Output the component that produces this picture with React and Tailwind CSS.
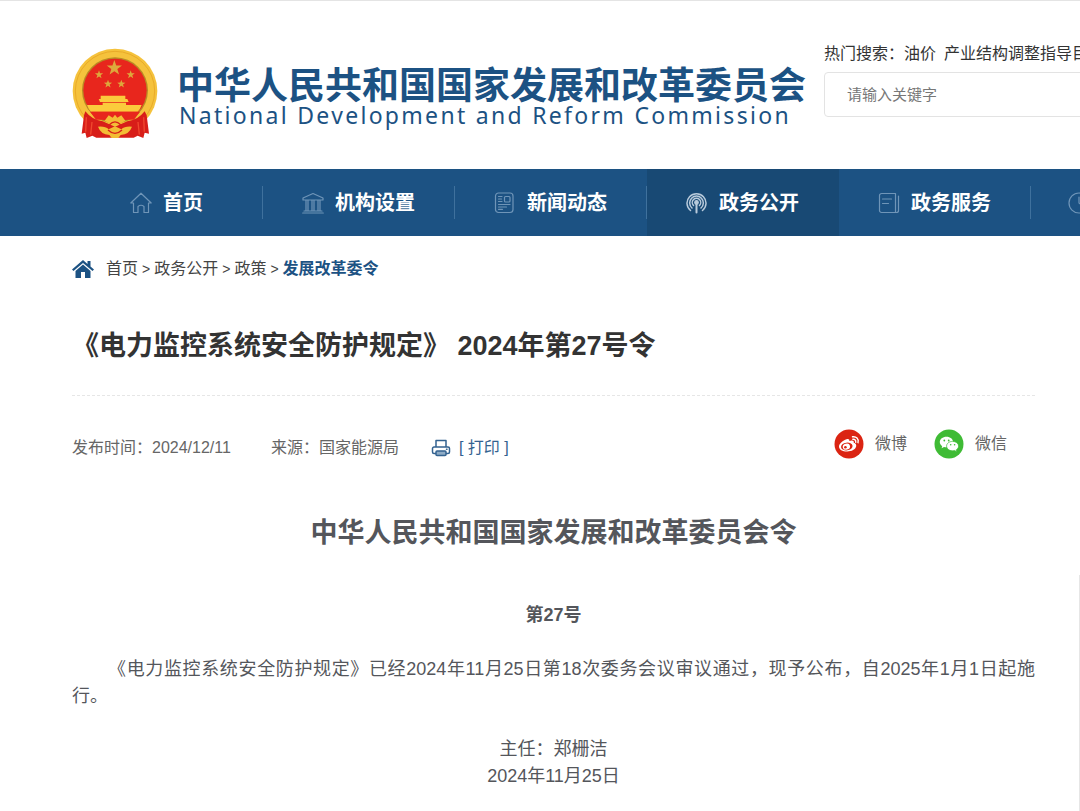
import React, { useState } from 'react';

const fontSans = "font-['Liberation_Sans','Noto_Sans_CJK_SC',sans-serif]";

function Emblem() {
  const star = 'M0-10 2.4-3.2 9.5-3.1 3.8 1.2 5.9 8.1 0 4-5.9 8.1-3.8 1.2-9.5-3.1-2.4-3.2Z';
  return (
    <svg viewBox="0 0 258 276" className="h-[92px] w-[86px] shrink-0" role="img" aria-label="国徽">
      <circle cx="129" cy="129" r="127" fill="#f5c23c" />
      <circle cx="129" cy="129" r="119" fill="none" stroke="#e9ab29" strokeWidth="3" />
      <circle cx="129" cy="127" r="99" fill="#b98a24" />
      <circle cx="129" cy="127" r="95" fill="#e8261d" />
      <g fill="#dda83c">
        <path d={star} transform="translate(127 60) scale(2.4)" />
        <path d={star} transform="translate(81 80) scale(1.3)" />
        <path d={star} transform="translate(176 80) scale(1.3)" />
        <path d={star} transform="translate(108 108) scale(1.3)" />
        <path d={star} transform="translate(148 108) scale(1.3)" />
      </g>
      <path
        fill="#fbcb3c"
        d="M94 143h66v10h6l4 9h-8v9h47q-4 12-12 20H57q-8-8-12-20h47v-9h-8l-4-9h6v-10Z"
      />
      <path fill="#e8261d" d="M90 162h74v2H90ZM54 191h150l-18 24H72Z" />
      <path
        fill="#d81e19"
        d="M40 190q20 26 52 30l37 16 37-16q32-4 52-30l6 12 7 55-13-3-4 16-17-7-12 6H73l-12-6-17 7-4-16-11 3 7-55Z"
      />
      <path
        fill="#f3bd35"
        d="M98 218l12-16 12 7 7-9 7 9 12-7 12 16-16 9q-15 7-30 0ZM78 236q22-2 32 8l19-9 19 9q10-10 32-8-8 23-34 25l-7 9h-20l-7-9q-26-2-34-25Z"
      />
      <path fill="none" stroke="#f0482f" strokeWidth="4" d="M43 208l-2 43M60 222l-4 38M215 208l2 43M198 222l4 38" />
      <path fill="none" stroke="#d81e19" strokeWidth="4" d="M112 230q17-17 34 0M108 246q21 20 42 0" />
    </svg>
  );
}

const line = { fill: 'none', stroke: 'currentColor', strokeWidth: 1.2, strokeLinejoin: 'round', strokeLinecap: 'round' };

function NavIcon({ name }) {
  return (
    <svg viewBox="0 0 22 22" className="h-[22px] w-[22px] shrink-0" aria-hidden="true" {...line}>
      {name === 'home' && <path d="M.8 11 11 1.200 21.200 11H18.500v9.500h-4.500v-6q-3-2.500-6 0v6H3.500V11Z" />}
      {name === 'bank' && (
        <path d="M1 6 11 1.500 21 6v2H1ZM4 8v11M6 8v11M10 8v11M12 8v11M16 8v11M18 8v11M2 19h18M.7 21h20.600" />
      )}
      {name === 'news' && (
        <>
          <rect x="1.500" y="1" width="17.500" height="19.500" rx="3" />
          <rect x="10.500" y="4.500" width="5.500" height="5.500" rx="1" />
          <path d="M4.500 4.500h3.500M4.500 7h3M4.500 9.500h3.500M4.500 12.500h11.500M4.500 15h8M4.500 17.300h4" />
        </>
      )}
      {name === 'signal' && (
        <>
          <path d="M4.500 18.500a9.500 9.500 0 1 1 12 0M6 16a6.800 6.800 0 1 1 9 0M7.500 13.500a4.200 4.200 0 1 1 6 0" strokeWidth="1.500" />
          <circle cx="10.500" cy="10.500" r="1.800" fill="currentColor" />
          <path d="M10.500 11v9.500" strokeWidth="2" />
        </>
      )}
      {name === 'service' && (
        <path d="M17.500 1.500V20.500H3.500a2 2 0 0 1-2-2v-15a2 2 0 0 1 2-2h14M17.500 20.500h1a2 2 0 0 0 2-2V4M4.500 7h9M4.500 11.500h6" />
      )}
      {name === 'clock' && (
        <>
          <circle cx="11" cy="11" r="10" />
          <path d="M11 5v6l4 3" />
        </>
      )}
    </svg>
  );
}

const navItems = [
  { label: '首页', icon: 'home' },
  { label: '机构设置', icon: 'bank' },
  { label: '新闻动态', icon: 'news' },
  { label: '政务公开', icon: 'signal', active: true },
  { label: '政务服务', icon: 'service' },
];

function Header() {
  const [keyword, setKeyword] = useState('');
  return (
    <header className="flex items-start overflow-hidden border-t border-[#e4e4e4] pb-[29px] pl-[72px]">
      <div className="flex shrink-0 items-center pt-[47px]">
        <Emblem />
        <div className="ml-[19px] pt-2.5 whitespace-nowrap text-[#1c5283]">
          <div className="text-[37px] leading-8 font-bold">中华人民共和国国家发展和改革委员会</div>
          <div className="pl-0.5 font-['Noto_Sans',sans-serif] text-[23px] leading-6 tracking-widest">
            National Development and Reform Commission
          </div>
        </div>
      </div>
      <div className="ml-[18px] min-w-0 flex-1 overflow-hidden pt-[41px]">
        <div className="flex gap-2 text-base leading-6 whitespace-nowrap text-[#333]">
          <span className="-mr-2">热门搜索：</span>
          <a href="#oil">油价</a>
          <a href="#industry">产业结构调整指导目录</a>
        </div>
        <input
          type="text"
          aria-label="请输入关键字"
          placeholder="请输入关键字"
          value={keyword}
          onChange={(e) => setKeyword(e.target.value)}
          className="mt-1.5 h-[45px] w-[400px] rounded-sm border border-[#e3e3e3] px-[22px] text-[15px] text-[#333] placeholder-[#777] focus:outline-none"
        />
      </div>
    </header>
  );
}

function Nav() {
  return (
    <nav className="overflow-hidden bg-[#1c5283] pl-[71px] text-white">
      <ul className="flex h-[67px]">
        {navItems.map((item) => (
          <li key={item.label} className={`flex w-48 shrink-0 items-center ${item.active ? 'bg-[#184974]' : ''}`}>
            <a href={`#${item.icon}`} className="flex flex-1 items-center justify-center gap-[11px] text-xl font-bold">
              <span className={item.active ? 'text-[#b9cbdc]' : 'text-[#6f95b8]'}>
                <NavIcon name={item.icon} />
              </span>
              {item.label}
            </a>
            <span className={`h-[33px] w-px ${item.active ? '' : 'bg-[#3f719d]'}`} />
          </li>
        ))}
        <li className="flex shrink-0 items-center pl-[37px] text-[#6f95b8]">
          <NavIcon name="clock" />
        </li>
      </ul>
    </nav>
  );
}

function Breadcrumb() {
  return (
    <div className="flex items-center gap-1 pt-[21px] text-base leading-6 text-[#444]">
      <svg viewBox="0 0 22 20" className="mr-2 h-5 w-[22px] text-[#1c5283]" fill="currentColor" aria-hidden="true">
        <path d="M11 1 0 10.500l1.500 1.500L11 4l9.500 8 1.500-1.500-3.500-3V2h-3v3Z" />
        <path d="M11 5.500 3.500 12v7h5.500v-6h4v6h5.500v-7Z" />
      </svg>
      <a href="#home">首页</a>
      <span className="text-sm">&gt;</span>
      <a href="#open">政务公开</a>
      <span className="text-sm">&gt;</span>
      <a href="#policy">政策</a>
      <span className="text-sm">&gt;</span>
      <a href="#orders" className="font-bold text-[#1c5283]">发展改革委令</a>
    </div>
  );
}

function WeiboIcon() {
  return (
    <svg viewBox="0 0 30 30" className="h-[30px] w-[30px]" aria-hidden="true">
      <circle cx="15" cy="15" r="14.500" fill="#db2412" />
      <path
        fill="#fff"
        d="M12.500 10.300c1.800-.7 3.200-.1 2.800 1.700 2.500-1 5-.8 4.400 1.700 2 .6 2.800 1.800 2.500 3.500-.6 3.200-4.800 5.300-9.200 5.200-4.500 0-8.100-2-8-5 .1-2.500 4-6.100 7.500-7.100Z"
      />
      <ellipse cx="12.800" cy="17.500" rx="5.800" ry="3.900" transform="rotate(-8 12.800 17.500)" fill="#db2412" />
      <ellipse cx="12.400" cy="17.700" rx="3.700" ry="3" transform="rotate(-15 12.400 17.700)" fill="#fff" />
      <circle cx="11.400" cy="18.200" r="1.300" fill="#db2412" />
      <path fill="none" stroke="#fff" strokeWidth="1.400" strokeLinecap="round" d="M18.500 7.800c3.600-.7 6.600 2.200 5.500 5.900M18.900 10.300c1.900-.3 3.300 1 2.800 2.900" />
    </svg>
  );
}

function WechatIcon() {
  return (
    <svg viewBox="0 0 30 30" className="h-[30px] w-[30px]" aria-hidden="true">
      <circle cx="15" cy="15" r="14.500" fill="#3fbb35" />
      <path fill="#fff" d="M12.500 7.800c-3.800 0-6.700 2.300-6.700 5.300 0 1.700.9 3.100 2.400 4.100l-.6 2 2.400-1.300c.8.200 1.600.3 2.500.3 3.700 0 6.600-2.300 6.600-5.200s-2.900-5.200-6.600-5.200Z" />
      <path fill="#fff" stroke="#3fbb35" strokeWidth=".7" d="M18.600 12.400c-3.400 0-6 2-6 4.700s2.600 4.700 6 4.700c.7 0 1.400-.1 2-.3l2.200 1.200-.5-1.900c1.400-.9 2.300-2.200 2.300-3.700 0-2.700-2.700-4.700-6-4.700Z" />
      <g fill="#3fbb35">
        <circle cx="10.300" cy="11.500" r=".9" />
        <circle cx="14.700" cy="11.500" r=".9" />
        <circle cx="16.700" cy="15.700" r=".8" />
        <circle cx="20.600" cy="15.700" r=".8" />
      </g>
    </svg>
  );
}

function ArticleMeta() {
  return (
    <div className="flex items-center justify-between pt-8 text-base leading-6 text-[#666]">
      <div className="flex items-center pt-2">
        <span>发布时间：2024/12/11</span>
        <span className="ml-10">来源：国家能源局</span>
        <button type="button" className="ml-8 flex cursor-pointer items-center gap-2 text-[#336290]">
          <svg viewBox="0 0 20 18" className="h-[18px] w-5" aria-hidden="true" {...line} strokeWidth="1.500">
            <path d="M5 8V1.500h10V8M5 14.500H3a1.500 1.500 0 0 1-1.500-1.500V9.500A1.500 1.500 0 0 1 3 8h14a1.500 1.500 0 0 1 1.500 1.500V13a1.500 1.500 0 0 1-1.500 1.500h-2M15.500 10.300h.5" />
            <rect x="5" y="12" width="10" height="4.500" rx="1" fill="#8eabc5" />
          </svg>
          [ 打印 ]
        </button>
      </div>
      <div className="mr-7 flex items-center gap-[27px]">
        <a href="#weibo" className="flex items-center gap-[11px]">
          <WeiboIcon />
          微博
        </a>
        <a href="#wechat" className="flex items-center gap-[11px]">
          <WechatIcon />
          微信
        </a>
      </div>
    </div>
  );
}

export default function App() {
  return (
    <div className={`flex min-h-screen flex-col overflow-hidden bg-white ${fontSans}`}>
      <Header />
      <Nav />
      <div className="flex flex-1">
        <main className="min-w-0 flex-1 pl-[72px]">
          <Breadcrumb />
          <h1 className="border-b border-dashed border-[#e6e6e6] pt-[47px] pb-[31px] text-[27px] leading-9 font-bold text-[#333]">
            《电力监控系统安全防护规定》 2024年第27号令
          </h1>
          <ArticleMeta />
          <article className="text-lg leading-[27px] text-[#54565b]">
            <h2 className="pt-[53px] text-center text-[27px] leading-10 font-bold">
              中华人民共和国国家发展和改革委员会令
            </h2>
            <p className="pt-[49px] text-center font-bold">第27号</p>
            <p className="indent-9 pt-[27px] text-justify">
              《电力监控系统安全防护规定》已经2024年11月25日第18次委务会议审议通过，现予公布，自2025年1月1日起施行。
            </p>
            <p className="pt-[26px] text-center">主任：郑栅洁</p>
            <p className="text-center">2024年11月25日</p>
          </article>
        </main>
        <aside className="flex w-[45px] shrink-0 justify-end pt-[339px]">
          <div className="w-px bg-[#e6e6e6]" />
        </aside>
      </div>
    </div>
  );
}
